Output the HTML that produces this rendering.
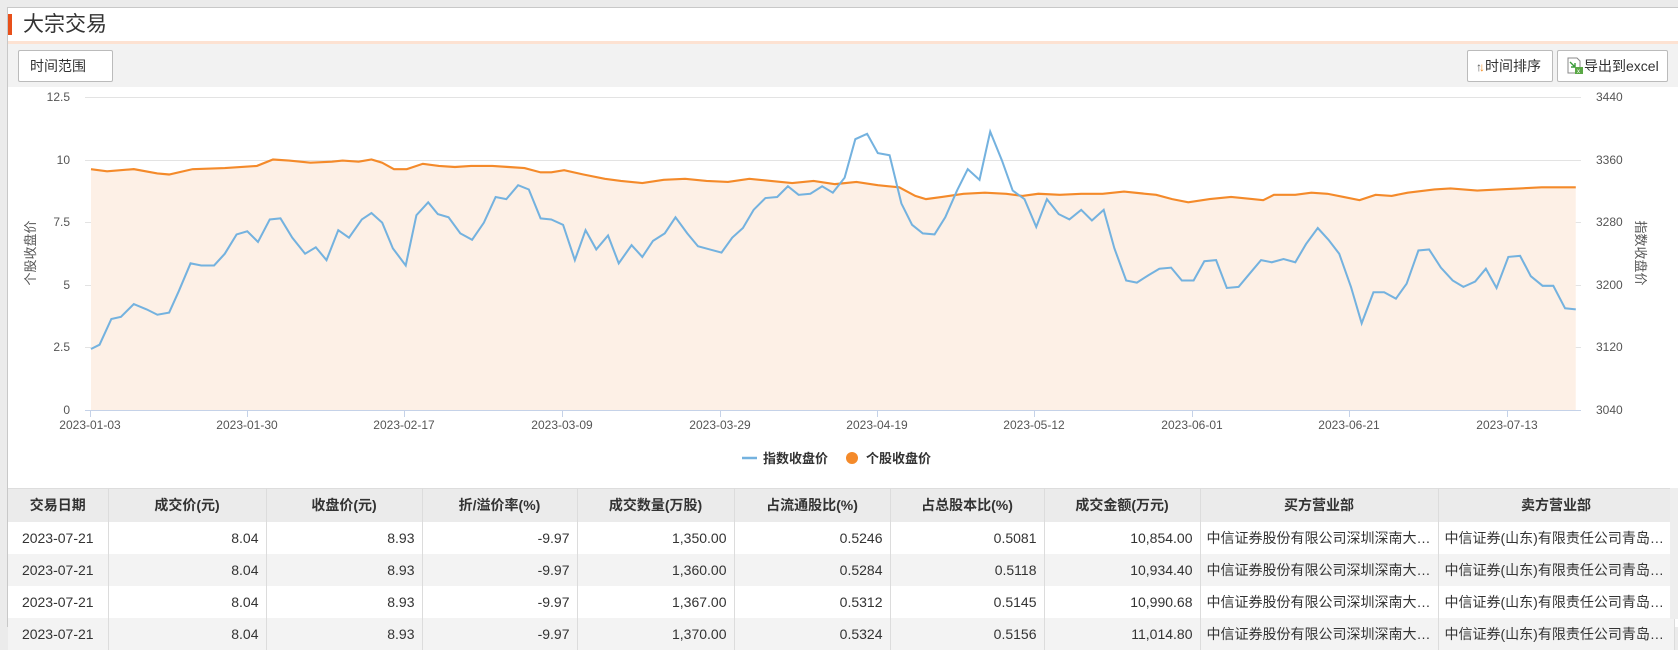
<!DOCTYPE html>
<html><head><meta charset="utf-8">
<style>
*{margin:0;padding:0;box-sizing:border-box}
body{width:1678px;height:619px;overflow:hidden;background:#ebebeb;font-family:"Liberation Sans","Noto Sans CJK SC",sans-serif;position:relative}
.panel{position:absolute;left:7px;top:7px;width:1680px;height:620px;background:#fff;border-left:1px solid #c8c8c8;border-top:1px solid #c8c8c8}
.bar{position:absolute;left:8px;top:14px;width:4px;height:21px;background:#e8501a}
.title{position:absolute;left:23px;top:11px;font-size:21px;color:#333;line-height:28px}
.stripe{position:absolute;left:8px;top:41px;width:1670px;height:3px;background:#fde2d2}
.tool{position:absolute;left:8px;top:44px;width:1670px;height:43px;background:#f2f2f2}
.btn{position:absolute;top:50px;height:32px;background:#fff;border:1px solid #bbb;border-radius:2px;font-size:14px;color:#333;line-height:30px}
table{position:absolute;left:8px;top:488px;border-collapse:collapse;font-size:14px;color:#333;table-layout:fixed}
th{background:#ebebeb;height:33px;font-weight:bold;border-right:1px solid #dcdcdc;border-top:1px solid #ddd;text-align:center}
td{height:32px;border-right:1px solid #dcdcdc;text-align:right;padding-right:7px;white-space:nowrap;overflow:hidden}
tr.g td{background:#f3f3f3}
td.c{text-align:center;padding:0}
td.l{text-align:left;padding-left:6px}
.sb{position:absolute;left:1670px;top:488px;width:8px;height:131px;background:#eee}
</style></head><body>
<div class="panel"></div>
<div class="bar"></div>
<div class="title">大宗交易</div>
<div class="stripe"></div>
<div class="tool"></div>
<div class="btn" style="left:18px;width:95px;padding-left:11px">时间范围</div>
<div class="btn" style="left:1467px;width:86px;padding-left:8px"><span style="font-size:12px;color:#555">↑</span><span style="font-size:12px;color:#f08a1c;margin-left:-3px">↓</span>时间排序</div>
<div class="btn" style="left:1557px;width:111px;padding-left:8px"><svg width="18" height="18" viewBox="0 0 18 18" style="vertical-align:-4px"><path d="M2 1h9l3 3v12H2z" fill="#fff" stroke="#888"/><path d="M4 5l5 5M9 6v4H5" stroke="#3a9a3a" fill="none" stroke-width="1.4"/><rect x="9" y="10" width="8" height="7" fill="#5aa845"/><text x="11" y="16" font-size="6" fill="#fff" font-family="Liberation Sans">x</text></svg>导出到excel</div>

<svg width="1678" height="619" style="position:absolute;left:0;top:0" font-family="Liberation Sans, Noto Sans CJK SC, sans-serif">
<g stroke="#e3e3e3" stroke-width="1">
<line x1="85" y1="97.5" x2="1581" y2="97.5"/><line x1="85" y1="160.5" x2="1581" y2="160.5"/><line x1="85" y1="222.5" x2="1581" y2="222.5"/><line x1="85" y1="285.5" x2="1581" y2="285.5"/><line x1="85" y1="347.5" x2="1581" y2="347.5"/>
</g>
<g transform="scale(1.0705)">
<polygon fill="#fdf0e6" points="85,383 85,158 100,160 125,158 147,162 158,163 180,158 210,157 240,155 255,149 270,150 290,152 310,151 320,150 335,151 347,149 357,152 368,158 380,158 395,153 410,155 425,156 440,155 460,155 475,156 490,157 505,161 515,161 527,159 545,163 565,167 580,169 600,171 620,168 640,167 660,169 680,170 700,167 720,169 740,171 760,169 780,172 800,170 820,173 840,175 855,183 865,186 880,184 900,181 920,180 940,181 955,183 970,181 990,182 1010,181 1030,181 1050,179 1070,181 1080,182 1095,186 1110,189 1130,186 1150,184 1170,186 1180,187 1190,182 1210,182 1225,180 1240,181 1255,184 1270,187 1285,182 1300,183 1315,180 1340,177 1355,176 1380,178 1400,177 1420,176 1440,175 1472,175 1472,383"/>
<polyline fill="none" stroke="#f48a2a" stroke-width="2" points="85,158 100,160 125,158 147,162 158,163 180,158 210,157 240,155 255,149 270,150 290,152 310,151 320,150 335,151 347,149 357,152 368,158 380,158 395,153 410,155 425,156 440,155 460,155 475,156 490,157 505,161 515,161 527,159 545,163 565,167 580,169 600,171 620,168 640,167 660,169 680,170 700,167 720,169 740,171 760,169 780,172 800,170 820,173 840,175 855,183 865,186 880,184 900,181 920,180 940,181 955,183 970,181 990,182 1010,181 1030,181 1050,179 1070,181 1080,182 1095,186 1110,189 1130,186 1150,184 1170,186 1180,187 1190,182 1210,182 1225,180 1240,181 1255,184 1270,187 1285,182 1300,183 1315,180 1340,177 1355,176 1380,178 1400,177 1420,176 1440,175 1472,175"/>
<polyline fill="none" stroke="#74b2df" stroke-width="1.9" points="85,326 93,322 104,298 113,296 125,284 137,289 147,294 158,292 167,272 178,246 188,248 200,248 210,237 221,219 231,216 241,226 252,205 262,204 273,222 285,237 295,231 305,243 316,215 326,222 338,205 347,199 357,208 367,232 379,248 389,201 400,189 409,200 419,203 430,218 441,224 452,208 463,184 473,186 484,173 494,177 505,204 515,205 526,210 537,243 547,215 557,233 568,220 578,246 590,229 600,240 610,225 621,218 631,203 642,218 652,230 663,233 674,236 684,222 694,213 704,196 715,185 726,184 736,174 746,182 757,181 768,174 778,180 789,166 799,130 810,125 820,143 831,145 842,190 852,210 862,218 873,219 883,203 894,178 904,158 915,168 925,123 936,150 946,178 957,186 968,212 978,186 989,200 999,205 1010,196 1020,206 1031,196 1041,232 1052,262 1062,264 1073,257 1083,251 1094,250 1104,262 1115,262 1125,244 1136,243 1146,269 1157,268 1167,256 1178,243 1188,245 1199,242 1210,245 1220,228 1231,213 1241,224 1251,237 1262,268 1272,302 1283,273 1293,273 1304,279 1314,265 1325,234 1335,233 1346,250 1357,262 1367,268 1378,263 1388,251 1398,269 1409,240 1420,239 1430,258 1441,267 1451,267 1462,288 1472,289"/>
</g>
<line x1="85" y1="410.5" x2="1581" y2="410.5" stroke="#c5d2e8"/>
<g stroke="#c5d2e8"><line x1="90.5" y1="410" x2="90.5" y2="417"/><line x1="247.5" y1="410" x2="247.5" y2="417"/><line x1="404.5" y1="410" x2="404.5" y2="417"/><line x1="562.5" y1="410" x2="562.5" y2="417"/><line x1="720.5" y1="410" x2="720.5" y2="417"/><line x1="877.5" y1="410" x2="877.5" y2="417"/><line x1="1034.5" y1="410" x2="1034.5" y2="417"/><line x1="1192.5" y1="410" x2="1192.5" y2="417"/><line x1="1349.5" y1="410" x2="1349.5" y2="417"/><line x1="1507.5" y1="410" x2="1507.5" y2="417"/></g>
<g font-size="12" fill="#555" text-anchor="end">
<text x="70" y="101">12.5</text><text x="70" y="164">10</text><text x="70" y="226">7.5</text><text x="70" y="289">5</text><text x="70" y="351">2.5</text><text x="70" y="414">0</text>
</g>
<g font-size="12" fill="#555">
<text x="1596" y="101">3440</text><text x="1596" y="164">3360</text><text x="1596" y="226">3280</text><text x="1596" y="289">3200</text><text x="1596" y="351">3120</text><text x="1596" y="414">3040</text>
</g>
<g font-size="12" fill="#555" text-anchor="middle">
<text x="90" y="429">2023-01-03</text><text x="247" y="429">2023-01-30</text><text x="404" y="429">2023-02-17</text><text x="562" y="429">2023-03-09</text><text x="720" y="429">2023-03-29</text><text x="877" y="429">2023-04-19</text><text x="1034" y="429">2023-05-12</text><text x="1192" y="429">2023-06-01</text><text x="1349" y="429">2023-06-21</text><text x="1507" y="429">2023-07-13</text>
</g>
<text transform="translate(35,253) rotate(-90)" font-size="13" fill="#555" text-anchor="middle">个股收盘价</text>
<text transform="translate(1636,253) rotate(90)" font-size="13" fill="#555" text-anchor="middle">指数收盘价</text>
<line x1="742" y1="458" x2="757" y2="458" stroke="#74b2df" stroke-width="2.5"/>
<text x="763" y="463" font-size="13" fill="#333" font-weight="bold">指数收盘价</text>
<circle cx="852" cy="458" r="6" fill="#f48a2a"/>
<text x="866" y="463" font-size="13" fill="#333" font-weight="bold">个股收盘价</text>
</svg>

<table>
<colgroup><col style="width:100px"><col style="width:158px"><col style="width:156px"><col style="width:155px"><col style="width:157px"><col style="width:156px"><col style="width:154px"><col style="width:156px"><col style="width:234px"><col style="width:236px"></colgroup>
<tr><th>交易日期</th><th>成交价(元)</th><th>收盘价(元)</th><th>折/溢价率(%)</th><th>成交数量(万股)</th><th>占流通股比(%)</th><th>占总股本比(%)</th><th>成交金额(万元)</th><th>买方营业部</th><th>卖方营业部</th></tr>
<tr><td class="c">2023-07-21</td><td>8.04</td><td>8.93</td><td>-9.97</td><td>1,350.00</td><td>0.5246</td><td>0.5081</td><td>10,854.00</td><td class="l">中信证券股份有限公司深圳深南大…</td><td class="l">中信证券(山东)有限责任公司青岛…</td></tr>
<tr class="g"><td class="c">2023-07-21</td><td>8.04</td><td>8.93</td><td>-9.97</td><td>1,360.00</td><td>0.5284</td><td>0.5118</td><td>10,934.40</td><td class="l">中信证券股份有限公司深圳深南大…</td><td class="l">中信证券(山东)有限责任公司青岛…</td></tr>
<tr><td class="c">2023-07-21</td><td>8.04</td><td>8.93</td><td>-9.97</td><td>1,367.00</td><td>0.5312</td><td>0.5145</td><td>10,990.68</td><td class="l">中信证券股份有限公司深圳深南大…</td><td class="l">中信证券(山东)有限责任公司青岛…</td></tr>
<tr class="g"><td class="c">2023-07-21</td><td>8.04</td><td>8.93</td><td>-9.97</td><td>1,370.00</td><td>0.5324</td><td>0.5156</td><td>11,014.80</td><td class="l">中信证券股份有限公司深圳深南大…</td><td class="l">中信证券(山东)有限责任公司青岛…</td></tr>
</table>
<div class="sb"></div>
</body></html>
